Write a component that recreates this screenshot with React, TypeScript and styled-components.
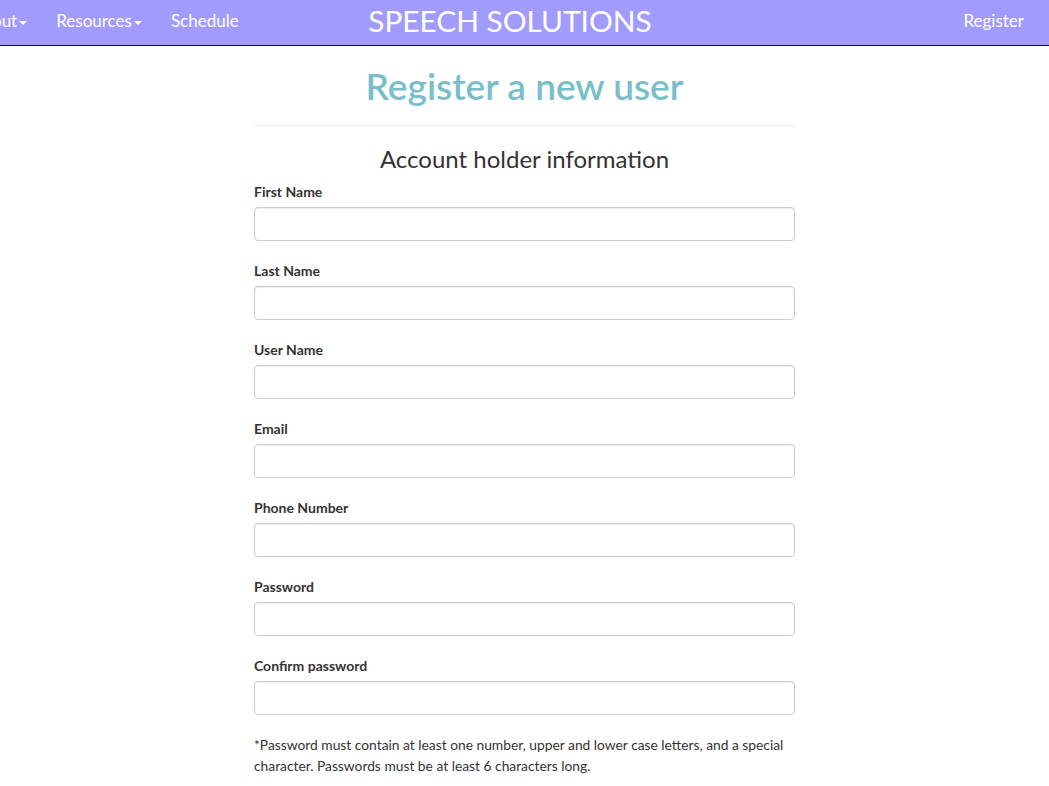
import React from 'react'
import styled, { createGlobalStyle } from 'styled-components'

const fields = [
  { id: 'first', label: 'First Name', type: 'text' },
  { id: 'last', label: 'Last Name', type: 'text' },
  { id: 'user', label: 'User Name', type: 'text' },
  { id: 'email', label: 'Email', type: 'email' },
  { id: 'phone', label: 'Phone Number', type: 'tel' },
  { id: 'password', label: 'Password', type: 'password' },
  { id: 'confirm', label: 'Confirm password', type: 'password' },
]

const App: React.FC = () => {
  return (
    <>
      <GlobalStyle />
      <NavBar>
        <NavLeft>
          <NavItem>
            About<Caret />
          </NavItem>
          <NavItem>
            Resources<Caret />
          </NavItem>
          <NavItem>Schedule</NavItem>
        </NavLeft>
        <Brand>SPEECH SOLUTIONS</Brand>
        <NavRight>
          <NavItem>Register</NavItem>
        </NavRight>
      </NavBar>

      <Main>
        <Title>Register a new user</Title>
        <Divider />
        <SubTitle>Account holder information</SubTitle>
        <form>
          {fields.map((f) => (
            <FormGroup key={f.id}>
              <Label htmlFor={f.id}>{f.label}</Label>
              <Input id={f.id} type={f.type} />
            </FormGroup>
          ))}
          <Note>
            *Password must contain at least one number, upper and lower case letters, and a special
            character. Passwords must be at least 6 characters long.
          </Note>
        </form>
      </Main>
    </>
  )
}

export default App

const GlobalStyle = createGlobalStyle`
  * {
    box-sizing: border-box;
  }

  body {
    margin: 0;
    background: #fff;
    color: #333;
    font-family: Lato, 'Open Sans', sans-serif;
    font-size: 14px;
    line-height: 1.42857;
  }
`

const NavBar = styled.header`
  height: 46px;
  background-color: #a29bfe;
  border-bottom: 1px solid #14122a;
  display: grid;
  grid-template-columns: 1fr auto 1fr;
  align-items: center;
  overflow: hidden;
`

const NavLeft = styled.nav`
  display: flex;
  align-items: center;
  gap: 29px;
  margin-left: -29px;
  padding-bottom: 2px;
`

const NavRight = styled.nav`
  display: flex;
  justify-content: flex-end;
  padding-right: 25px;
  padding-bottom: 2px;
`

const NavItem = styled.span`
  color: #fff;
  font-size: 17px;
  white-space: nowrap;
  display: inline-flex;
  align-items: center;
`

const Caret = styled.span`
  display: inline-block;
  width: 0;
  height: 0;
  margin-left: 2px;
  margin-top: 2px;
  border-top: 4px solid #fff;
  border-left: 4px solid transparent;
  border-right: 4px solid transparent;
`

const Brand = styled.div`
  color: #fff;
  font-size: 29.8px;
  line-height: 1;
  margin-right: 29px;
  padding-bottom: 4px;
`

const Main = styled.main`
  width: 541px;
  margin: 0 auto;
`

const Title = styled.h1`
  margin: 20px 0 0;
  text-align: center;
  color: #79bfcb;
  font-size: 37px;
  font-weight: 600;
  line-height: 1.1;
`

const Divider = styled.hr`
  margin: 18px 0 0;
  border: 0;
  border-top: 1px solid #eee;
`

const SubTitle = styled.h2`
  margin: 20px 0 10px;
  text-align: center;
  font-size: 24px;
  font-weight: 400;
  line-height: 1.1;
  color: #333;
`

const FormGroup = styled.div`
  margin-bottom: 20px;
`

const Label = styled.label`
  display: block;
  margin-bottom: 5px;
  font-weight: 700;
  font-size: 14px;
  line-height: 20px;
  color: #333;
`

const Input = styled.input`
  display: block;
  width: 100%;
  height: 34px;
  padding: 6px 12px;
  border: 1px solid #ccc;
  border-radius: 4px;
  box-shadow: inset 0 1px 1px rgba(0, 0, 0, 0.075);
  font: inherit;
`

const Note = styled.p`
  margin: -1px 0 0;
  font-size: 13.8px;
  line-height: 21px;
  color: #333;
`
